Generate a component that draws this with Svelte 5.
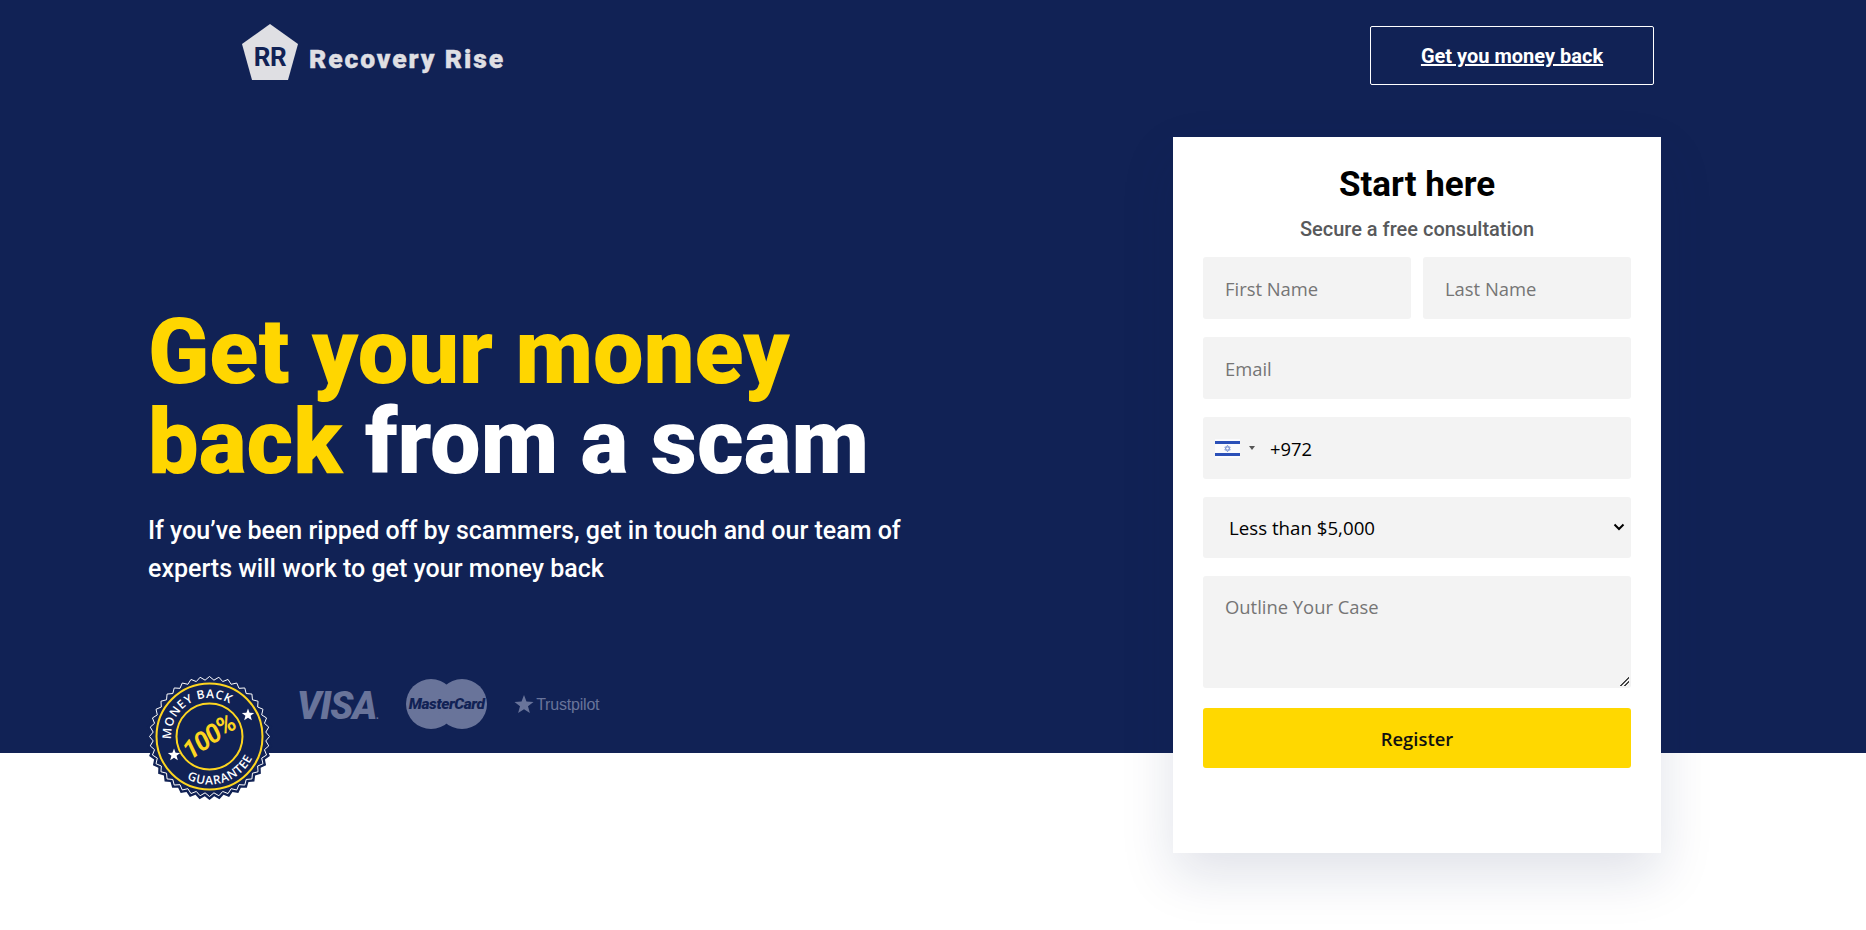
<script>
  const seal = { c: 63.5, teeth: 40 };

  const zigzag = (outer, inner) => {
    const pts = [];
    for (let i = 0; i < seal.teeth * 2; i++) {
      const r = i % 2 ? inner : outer;
      const a = (i * Math.PI) / seal.teeth;
      pts.push(`${(seal.c + r * Math.cos(a)).toFixed(2)},${(seal.c + r * Math.sin(a)).toFixed(2)}`);
    }
    return pts.join(" ");
  };

  const star = (cx, cy, r) => {
    const pts = [];
    for (let i = 0; i < 10; i++) {
      const rr = i % 2 ? r * 0.42 : r;
      const a = -Math.PI / 2 + (i * Math.PI) / 5;
      pts.push(`${(cx + rr * Math.cos(a)).toFixed(2)},${(cy + rr * Math.sin(a)).toFixed(2)}`);
    }
    return pts.join(" ");
  };

  // angle in degrees, clockwise from the top
  const point = (r, deg) => {
    const a = ((deg - 90) * Math.PI) / 180;
    return `${(seal.c + r * Math.cos(a)).toFixed(2)} ${(seal.c + r * Math.sin(a)).toFixed(2)}`;
  };
  const topArc = `M ${point(38.5, -94)} A 38.5 38.5 0 0 1 ${point(38.5, 70)}`;
  const bottomArc = `M ${point(48, 208)} A 48 48 0 0 0 ${point(48, 50)}`;
</script>

<div class="page">
  <section class="hero">
    <header>
      <div class="logo">
        <div class="mark">
          <svg viewBox="0 0 56 56" width="56" height="56" aria-hidden="true">
            <polygon points="28,0 56,20 46,56 10,56 0,20" fill="#dfdfe3" />
          </svg>
          <span>RR</span>
        </div>
        <span class="brand">Recovery Rise</span>
      </div>
      <a class="cta" href="#form">Get you money back</a>
    </header>

    <div class="main">
      <div class="intro">
        <h1><em>Get your money back</em> from a scam</h1>
        <p>If you’ve been ripped off by scammers, get in touch and our team of experts will work to get your money back</p>

        <div class="trust">
          <svg class="seal" viewBox="0 0 127 127" width="127" height="127" role="img" aria-label="Money back guarantee">
            <polygon points={zigzag(63.5, 60)} fill="#112255" />
            <polygon points={zigzag(60, 56.5)} fill="none" stroke="#fff" stroke-width="1" />
            <circle cx="63.5" cy="63.5" r="53" fill="none" stroke="#fdd520" stroke-width="2" />
            <circle cx="63.5" cy="63.5" r="33" fill="none" stroke="#fdd520" stroke-width="2" />
            <path id="seal-top" d={topArc} fill="none" />
            <path id="seal-bottom" d={bottomArc} fill="none" />
            <text class="seal-text"><textPath href="#seal-top">MONEY BACK</textPath></text>
            <text class="seal-text"><textPath href="#seal-bottom">GUARANTEE</textPath></text>
            <polygon points={star(102, 42, 6.5)} fill="#fff" />
            <polygon points={star(28, 82, 6.5)} fill="#fff" />
            <text class="seal-pct" x="63" y="72" text-anchor="middle" transform="rotate(-35 63.5 63.5)">100%</text>
          </svg>

          <div class="pay visa">VISA<small>.</small></div>

          <div class="pay mc">
            <i></i><i></i>
            <span>MasterCard</span>
          </div>

          <div class="pay tp">
            <svg viewBox="0 0 20 20" width="20" height="20" aria-hidden="true">
              <polygon points={star(10, 10, 10)} fill="#69749a" />
            </svg>
            <span>Trustpilot</span>
          </div>
        </div>
      </div>

      <form class="card" id="form" onsubmit={(e) => e.preventDefault()}>
        <h2>Start here</h2>
        <h3>Secure a free consultation</h3>

        <div class="row">
          <input type="text" placeholder="First Name" />
          <input type="text" placeholder="Last Name" />
        </div>
        <input type="email" placeholder="Email" />

        <div class="phone">
          <svg class="flag" viewBox="0 0 25 19" width="25" height="19" aria-hidden="true">
            <rect width="25" height="19" fill="#fbfbfd" />
            <rect y="2" width="25" height="3" fill="#2b50b8" />
            <rect y="14" width="25" height="3" fill="#2b50b8" />
            <polygon points="12.5,6.2 15.2,11 9.8,11" fill="none" stroke="#7c94d4" stroke-width="0.9" />
            <polygon points="12.5,12.8 15.2,8 9.8,8" fill="none" stroke="#7c94d4" stroke-width="0.9" />
          </svg>
          <span class="caret"></span>
          <input type="tel" value="+972" />
        </div>

        <div class="select">
          <select>
            <option>Less than $5,000</option>
            <option>$5,000 - $25,000</option>
            <option>More than $25,000</option>
          </select>
          <svg viewBox="0 0 12 8" width="12" height="8" aria-hidden="true">
            <path d="M1.5 1.5 6 6l4.5-4.5" fill="none" stroke="#000" stroke-width="2" />
          </svg>
        </div>

        <textarea placeholder="Outline Your Case"></textarea>

        <button type="submit">Register</button>
      </form>
    </div>
  </section>
</div>

<style>
  :global(body) {
    background: #fff;
    font-family: Roboto, sans-serif;
    overflow: hidden;
  }
  .page {
    height: 930px;
  }
  .hero {
    background: #112255;
    height: 753px;
    display: flex;
    flex-direction: column;
  }
  header {
    flex: none;
    display: flex;
    justify-content: space-between;
    align-items: flex-start;
    height: 137px;
    box-sizing: border-box;
    padding: 24px 212px 0 242px;
  }
  .logo {
    display: flex;
    align-items: center;
    gap: 11px;
  }
  .mark {
    position: relative;
    width: 56px;
    height: 56px;
  }
  .mark span {
    position: absolute;
    inset: 10px 0 0;
    text-align: center;
    color: #112255;
    font: 700 26px/46px Roboto, sans-serif;
    letter-spacing: -0.5px;
  }
  .brand {
    color: #dfdfe3;
    font: 900 26.5px/1 Roboto, sans-serif;
    letter-spacing: 1.9px;
    -webkit-text-stroke: 0.4px #dfdfe3;
    margin-top: 14px;
  }
  .cta {
    margin-top: 2px;
    width: 284px;
    height: 59px;
    box-sizing: border-box;
    border: 1px solid #fff;
    border-radius: 2px;
    color: #fff;
    font: 700 20px/59px Roboto, sans-serif;
    text-align: center;
    text-decoration: underline;
  }
  .main {
    display: flex;
    justify-content: space-between;
    padding: 0 205px 0 148px;
    flex: 1;
    min-height: 0;
  }
  .intro {
    width: 790px;
    padding-top: 171px;
  }
  h1 {
    margin: 0;
    color: #fff;
    font: 900 90px/90px Roboto, sans-serif;
  }
  h1 em {
    font-style: normal;
    color: #ffd600;
  }
  .intro p {
    margin: 24px 0 0;
    color: #fff;
    font: 500 25px/38px Roboto, sans-serif;
  }
  .trust {
    display: flex;
    align-items: flex-start;
    margin-top: 85px;
    margin-left: -2px;
  }
  .seal {
    flex: none;
  }
  .seal-text {
    fill: #fff;
    font: 600 12px "Open Sans", sans-serif;
    letter-spacing: 0.7px;
  }
  .seal-pct {
    fill: #fdd520;
    font: italic 700 26px Roboto, sans-serif;
    letter-spacing: -1px;
  }
  .pay {
    color: #69749a;
  }
  .visa {
    margin: 14px 0 0 24px;
    font: italic 900 38px/1 Roboto, sans-serif;
    letter-spacing: -1.1px;
  }
  .visa small {
    font-size: 10px;
  }
  .mc {
    position: relative;
    width: 81px;
    height: 50px;
    margin: 6px 0 0 28px;
  }
  .mc i {
    position: absolute;
    top: 0;
    left: 0;
    width: 50px;
    height: 50px;
    border-radius: 50%;
    background: #69749a;
  }
  .mc i + i {
    left: 31px;
  }
  .mc span {
    position: absolute;
    inset: 0;
    text-align: center;
    color: #112255;
    font: italic 900 15.5px/50px Roboto, sans-serif;
    letter-spacing: -0.4px;
  }
  .tp {
    display: flex;
    align-items: center;
    gap: 2px;
    height: 50px;
    margin: 7px 0 0 27px;
    font: 400 16px/1 "Liberation Sans", sans-serif;
    letter-spacing: -0.2px;
  }
  .card {
    width: 488px;
    height: 716px;
    box-sizing: border-box;
    padding: 25px 30px 0;
    background: #fff;
    box-shadow: 0 22px 50px rgba(17, 34, 85, 0.13);
    display: flex;
    flex-direction: column;
    flex: none;
    position: relative;
  }
  h2 {
    margin: 0;
    text-align: center;
    font: 700 35px/46px Roboto, sans-serif;
    color: #000;
  }
  h3 {
    margin: 8px 0 15px;
    text-align: center;
    font: 500 20px/26px Roboto, sans-serif;
    color: #58595b;
  }
  .row {
    display: flex;
    gap: 12px;
  }
  .row input {
    flex: 1;
    min-width: 0;
  }
  input,
  select,
  textarea {
    box-sizing: border-box;
    height: 62px;
    width: 100%;
    border: 0;
    border-radius: 3px;
    outline: 0;
    background: #f3f3f3;
    padding: 0 22px;
    color: #000;
    font: 400 18.4px "Open Sans", sans-serif;
  }
  .card > input,
  .phone,
  .select,
  textarea {
    margin-top: 18px;
  }
  .phone {
    display: flex;
    align-items: center;
    height: 62px;
    background: #f3f3f3;
    border-radius: 3px;
    padding-left: 12px;
  }
  .flag {
    flex: none;
  }
  .caret {
    width: 0;
    height: 0;
    margin-left: 9px;
    border: 3px solid transparent;
    border-top: 4px solid #555;
    border-bottom: 0;
  }
  .phone input {
    background: none;
    padding: 0 0 0 15px;
    flex: 1;
  }
  .select {
    position: relative;
  }
  select {
    display: block;
    appearance: none;
    height: 61px;
    padding-left: 26px;
    font-size: 18.7px;
  }
  .select svg {
    position: absolute;
    top: 26px;
    right: 6px;
    pointer-events: none;
  }
  textarea {
    height: 112px;
    padding-top: 18px;
    display: block;
  }
  textarea::-webkit-resizer {
    background: linear-gradient(135deg, transparent 46%, #444 46%, #444 56%, transparent 56%, transparent 72%, #444 72%, #444 82%, transparent 82%) no-repeat right 2px bottom 2px / 9px 9px;
  }
  ::placeholder {
    color: #757575;
  }
  button {
    margin-top: 20px;
    height: 60px;
    border: 0;
    border-radius: 3px;
    background: #ffd800;
    color: #111;
    font: 600 18.4px "Open Sans", sans-serif;
  }
</style>
